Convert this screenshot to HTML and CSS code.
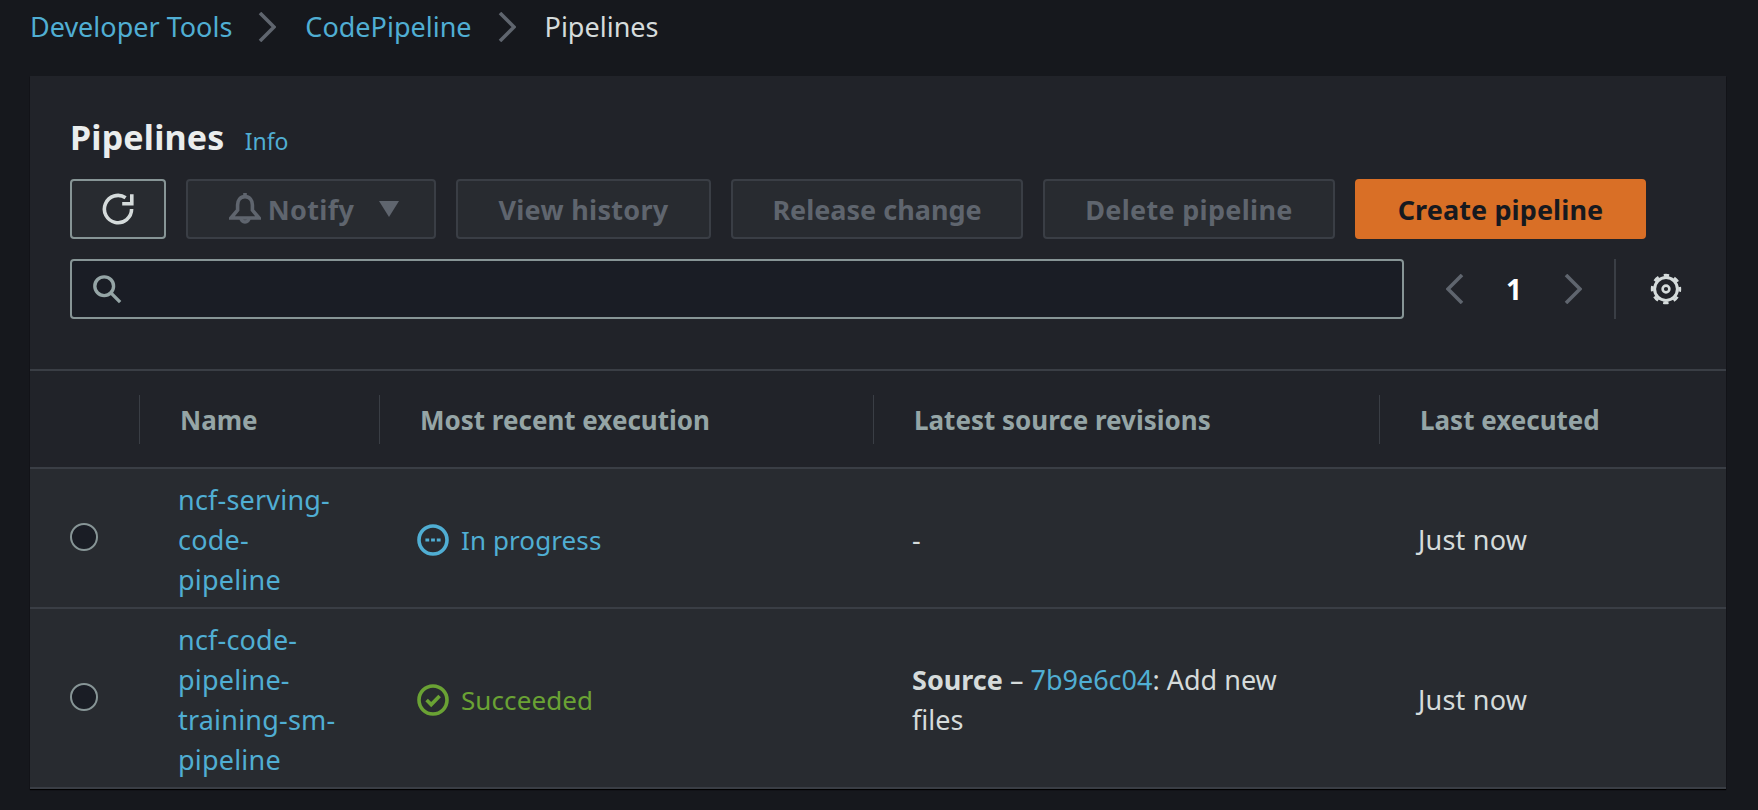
FILE: index.html
```html
<!DOCTYPE html>
<html lang="en">
<head>
    <meta charset="UTF-8">
    <title>Pipelines</title>
    <link rel="stylesheet" href="styles.css">
</head>
<body>
<!-- breadcrumb -->
<nav class="crumbs">
    <a class="link" href="#">Developer Tools</a>
    <svg class="crumb-sep" viewBox="0 0 18 30"><path d="M2 1l14 14L2 29"/></svg>
    <a class="link" href="#">CodePipeline</a>
    <svg class="crumb-sep" viewBox="0 0 18 30"><path d="M2 1l14 14L2 29"/></svg>
    <span class="crumb-current">Pipelines</span>
</nav>

<section class="panel">
    <header class="panel-head">
        <div class="title-row">
            <h1 class="title">Pipelines</h1>
            <a class="link info" href="#">Info</a>
        </div>
        <div class="toolbar">
            <button class="btn btn-icon">
                <svg class="icon" viewBox="0 0 16 16"><path d="M14.8 8a6.8 6.8 0 1 1-3-5.6"/><path class="sq" d="M14.9 .6v4.800h-4.800"/></svg>
            </button>
            <button class="btn btn-off btn-notify" disabled>
                <svg class="icon" viewBox="0 0 16 16"><path d="M8 1.8C5.6 1.8 4.3 3.8 4.3 6v2.6L1 12.5h14l-3.300-3.900V6c0-2.200-1.300-4.200-3.700-4.200z"/><path d="M8 0v1.800M6 12.500a2 2 0 0 0 4 0"/></svg>
                <span>Notify</span>
                <svg class="caret" viewBox="0 0 20 16"><path d="M0 0h20L10 16z"/></svg>
            </button>
            <button class="btn btn-off btn-view" disabled>View history</button>
            <button class="btn btn-off btn-release" disabled>Release change</button>
            <button class="btn btn-off btn-delete" disabled>Delete pipeline</button>
            <button class="btn btn-primary">Create pipeline</button>
        </div>
        <div class="filter-row">
            <label class="search">
                <svg class="icon search-icon" viewBox="0 0 16 16"><circle cx="6.500" cy="6.500" r="5"/><path d="M10.200 10.200L15 15"/></svg>
                <input class="search-input" type="text">
            </label>
            <div class="pager">
                <svg class="pager-arrow" viewBox="0 0 18 30"><path d="M16 1L2 15l14 14"/></svg>
                <span class="pager-num">1</span>
                <svg class="pager-arrow" viewBox="0 0 18 30"><path d="M2 1l14 14L2 29"/></svg>
            </div>
            <div class="settings">
                <svg class="gear" viewBox="0 0 16 16">
                    <circle class="gear-ring" cx="8" cy="8" r="5.700"/>
                    <circle class="gear-teeth" cx="8" cy="8" r="6.900"/>
                    <circle class="gear-hub" cx="8" cy="8" r="1.700"/>
                </svg>
            </div>
        </div>
    </header>

    <table class="grid">
        <colgroup>
            <col class="col-radio">
            <col class="col-name">
            <col class="col-exec">
            <col class="col-rev">
            <col>
        </colgroup>
        <thead>
            <tr>
                <th></th>
                <th><span class="th-in">Name</span></th>
                <th><span class="th-in">Most recent execution</span></th>
                <th><span class="th-in">Latest source revisions</span></th>
                <th><span class="th-in">Last executed</span></th>
            </tr>
        </thead>
        <tbody>
            <tr>
                <td class="cell-radio"><span class="radio"></span></td>
                <td class="cell-name"><a class="link" href="#">ncf-serving-code-pipeline</a></td>
                <td>
                    <span class="status status-run">
                        <svg class="icon" viewBox="0 0 16 16"><circle cx="8" cy="8" r="7"/><path class="dots" d="M4.200 8h7.600"/></svg>
                        In progress
                    </span>
                </td>
                <td class="cell-rev">-</td>
                <td class="cell-last">Just now</td>
            </tr>
            <tr>
                <td class="cell-radio"><span class="radio"></span></td>
                <td class="cell-name"><a class="link" href="#">ncf-code-pipeline-training-sm-pipeline</a></td>
                <td>
                    <span class="status status-ok">
                        <svg class="icon" viewBox="0 0 16 16"><circle cx="8" cy="8" r="7"/><path d="M4.800 8l2.300 2.300 4.200-4.300"/></svg>
                        Succeeded
                    </span>
                </td>
                <td class="cell-rev"><b>Source</b> – <a class="link" href="#">7b9e6c04</a>: Add new<br>files</td>
                <td class="cell-last">Just now</td>
            </tr>
        </tbody>
    </table>
</section>
</body>
</html>
```

FILE: styles.css
```css
* {
    box-sizing: border-box;
}
body {
    margin: 0;
    height: 810px;
    overflow: hidden;
    background-color: #16181d;
    color: #d5dbdb;
    font-family: "Noto Sans", "Open Sans", sans-serif;
    font-size: 27px;
    line-height: 40px;
}
.link {
    color: #50aed3;
    text-decoration: none;
}

/* breadcrumb */
.crumbs {
    display: flex;
    align-items: center;
    gap: 26px;
    height: 76px;
    padding: 0 0 22px 30px;
}
.crumb-sep {
    width: 18px;
    height: 30px;
    margin-right: 3px;
    fill: none;
    stroke: #5f656e;
    stroke-width: 3.600;
}
.crumb-current {
    color: #d5dbdb;
}

/* panel */
.panel {
    margin: 0 32px 0 30px;
    background-color: #212329;
    box-shadow: 0 1px 1px #000;
}
.panel-head {
    padding: 41px 40px 50px;
}
.title-row {
    display: flex;
    align-items: baseline;
    gap: 20px;
    height: 40px;
    margin-bottom: 22px;
}
.title {
    margin: 0;
    color: #eaeded;
    font-size: 34px;
    font-weight: 700;
    letter-spacing: .2px;
}
.info {
    font-size: 23px;
}

/* buttons */
.toolbar {
    display: flex;
    gap: 20px;
    margin-bottom: 20px;
}
.btn {
    display: flex;
    flex: none;
    align-items: center;
    justify-content: center;
    width: 291px;
    height: 60px;
    padding: 0;
    border: 2px solid #879596;
    border-radius: 4px;
    background-color: #282b30;
    color: #d5dbdb;
    font: 700 27px "Noto Sans", "Open Sans", sans-serif;
    letter-spacing: .1px;
}
.btn-icon {
    width: 96px;
}
.btn-off {
    border-color: #3a3e45;
    color: #5f656e;
}
.btn-notify {
    width: 250px;
    padding-left: 6px;
    gap: 7px;
    letter-spacing: .3px;
}
.btn-view {
    width: 255px;
    letter-spacing: .3px;
}
.btn-release {
    width: 292px;
    letter-spacing: 0;
}
.btn-delete {
    width: 292px;
    letter-spacing: .3px;
}
.btn-primary {
    border-color: #d96f26;
    background-color: #d96f26;
    color: #16191f;
}
.icon {
    flex: none;
    width: 32px;
    height: 32px;
    fill: none;
    stroke: currentColor;
    stroke-width: 1.800;
}
.sq {
    stroke-linejoin: miter;
}
.caret {
    width: 20px;
    height: 16px;
    margin-left: 18px;
    fill: currentColor;
}

/* search row */
.filter-row {
    display: flex;
    align-items: stretch;
    height: 60px;
}
.search {
    display: flex;
    align-items: center;
    flex: 0 0 1334px;
    padding-left: 20px;
    border: 2px solid #879596;
    border-radius: 4px;
    background-color: #1a1d25;
    color: #95a5a6;
}
.search-icon {
    width: 30px;
    height: 30px;
    stroke-width: 1.800;
}
.search-input {
    flex: 1;
    min-width: 0;
    border: 0;
    outline: 0;
    background: none;
}
.pager {
    display: flex;
    align-items: center;
    justify-content: space-between;
    width: 212px;
    padding: 0 32px 0 42px;
    border-right: 2px solid #3a3e45;
}
.pager-arrow {
    width: 18px;
    height: 30px;
    fill: none;
    stroke: #5f656e;
    stroke-width: 3.600;
}
.pager-num {
    color: #fff;
    font-size: 28px;
    font-weight: 700;
}
.settings {
    display: flex;
    align-items: center;
    padding-left: 34px;
}
.gear {
    width: 32px;
    height: 32px;
    fill: none;
    stroke: #d5dbdb;
}
.gear-ring {
    stroke-width: 1.500;
}
.gear-teeth {
    stroke-width: 1.400;
    stroke-dasharray: 2.710 2.710;
    stroke-dashoffset: 1.355;
}
.gear-hub {
    stroke-width: 1.300;
}

/* table */
.grid {
    width: 100%;
    border-collapse: collapse;
    table-layout: fixed;
}
.col-radio {
    width: 109px;
}
.col-name {
    width: 240px;
}
.col-exec {
    width: 494px;
}
.col-rev {
    width: 506px;
}
th {
    height: 98px;
    padding: 0;
    border-top: 2px solid #3a3e45;
    border-bottom: 2px solid #3a3e45;
    color: #95a5a6;
    font-size: 26px;
    font-weight: 700;
    text-align: left;
}
.th-in {
    display: block;
    padding: 1px 0 0 40px;
    border-left: 1px solid #3a3e45;
    line-height: 48px;
}
td {
    padding: 11px 60px 7px 39px;
    border-bottom: 2px solid #3a3e45;
    background-color: #282b30;
}
.cell-radio {
    padding: 0 0 0 40px;
}
.radio {
    display: block;
    width: 28px;
    height: 28px;
    margin-bottom: 2px;
    border: 2px solid #879596;
    border-radius: 50%;
    background-color: #1a1d25;
}
.cell-name {
    padding-right: 30px;
    letter-spacing: .2px;
}
.cell-last {
    letter-spacing: .2px;
}
.status {
    display: flex;
    align-items: center;
    gap: 12px;
    margin: 0 0 0 -1px;
    font-size: 26px;
    letter-spacing: .1px;
}
.status-run {
    color: #50aed3;
}
.status-ok {
    color: #6aa234;
}
.dots {
    stroke-width: 1.500;
    stroke-dasharray: 1.900 .95;
}
b {
    font-weight: 700;
}
```
